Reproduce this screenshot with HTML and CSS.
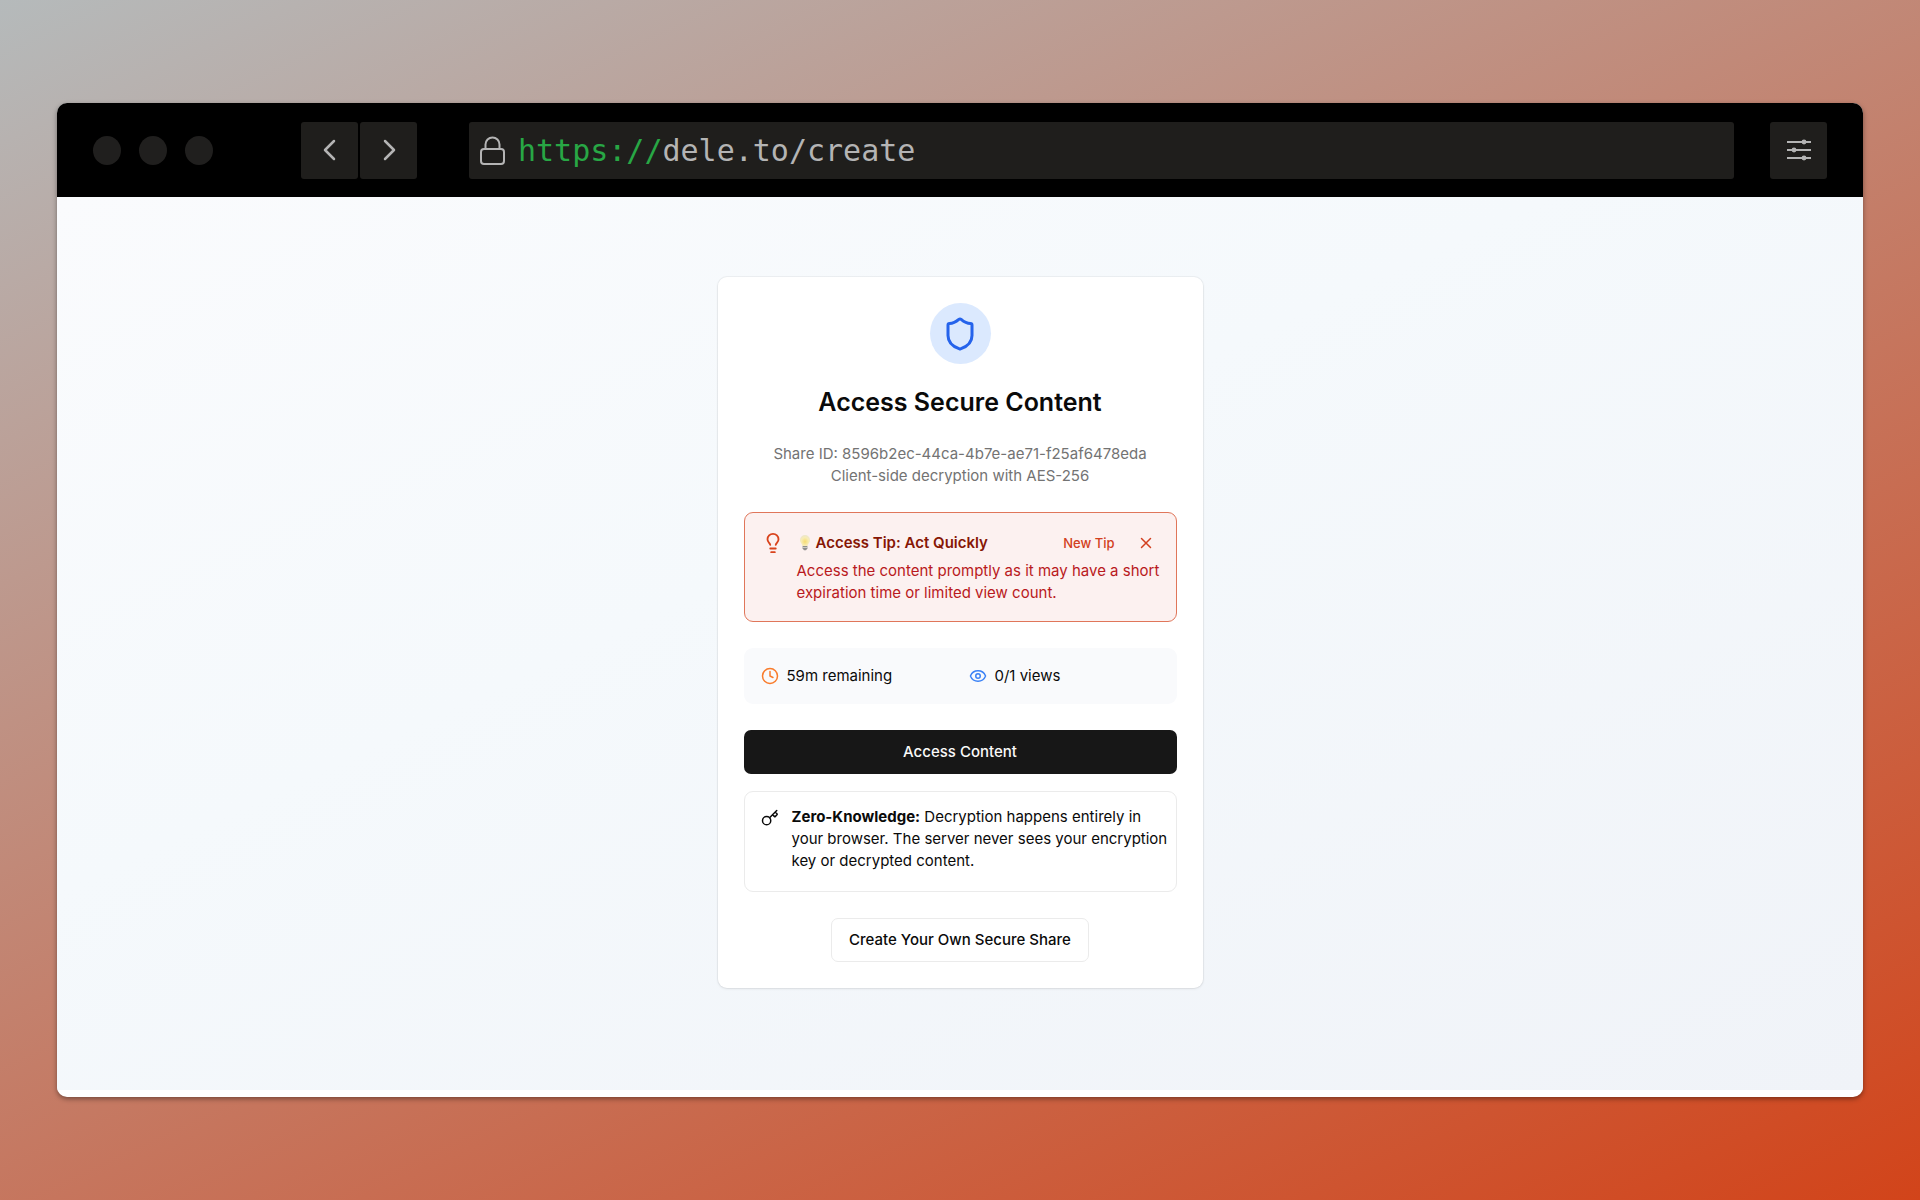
FILE: index.html
```html
<!DOCTYPE html>
<html lang="en">
<head>
<meta charset="utf-8">
<meta name="viewport" content="width=device-width, initial-scale=1">
<title>Access Secure Content</title>
<link rel="stylesheet" href="styles.css">
</head>
<body>
<div class="window">
  <header class="toolbar">
    <div class="lights"><span></span><span></span><span></span></div>
    <nav class="history" aria-label="History">
      <button type="button" class="tool" aria-label="Back"><svg width="32" height="32" viewBox="0 0 32 32"><path d="M20 7l-9 9 9 9"/></svg></button>
      <button type="button" class="tool" aria-label="Forward"><svg width="32" height="32" viewBox="0 0 32 32"><path d="M12 7l9 9-9 9"/></svg></button>
    </nav>
    <div class="address">
      <svg class="lock" width="26" height="30" viewBox="0 0 26 30"><rect x="1" y="13" width="23" height="15" rx="3"/><path d="M5.500 13V8.500a7 7 0 0 1 14 0V13"/></svg>
      <label class="scheme" for="url">https://</label>
      <input class="url" id="url" type="text" value="dele.to/create" spellcheck="false">
    </div>
    <button type="button" class="tool" aria-label="Settings"><svg class="sliders" width="24" height="24" viewBox="0 0 24 24"><path d="M0 4h24M0 12h24M0 20h24"/><circle cx="17" cy="4" r="2.4"/><circle cx="7" cy="12" r="2.4"/><circle cx="17" cy="20" r="2.4"/></svg></button>
  </header>
  <main class="page">
    <section class="card">
      <div class="badge"><svg class="icon" width="36" height="36" viewBox="0 0 24 24"><path d="M20 13c0 5-3.500 7.500-7.660 8.950a1 1 0 0 1-.67-.01C7.500 20.500 4 18 4 13V6a1 1 0 0 1 1-1c2 0 4.500-1.200 6.240-2.720a1.170 1.170 0 0 1 1.520 0C14.510 3.810 17 5 19 5a1 1 0 0 1 1 1z"/></svg></div>
      <h1 class="title">Access Secure Content</h1>
      <p class="description">Share ID: 8596b2ec-44ca-4b7e-ae71-f25af6478eda<br>Client-side decryption with AES-256</p>

      <div class="tip" role="alert">
        <svg class="icon tip-icon" width="22" height="22" viewBox="0 0 24 24"><path d="M15 14c.2-1 .7-1.700 1.500-2.500 1-.9 1.500-2.200 1.500-3.500A6 6 0 0 0 6 8c0 1 .2 2.200 1.500 3.500.7.7 1.300 1.500 1.500 2.500M9 18h6M10 22h4"/></svg>
        <div class="tip-body">
          <div class="tip-head">
            <svg class="bulb" width="16" height="18" viewBox="0 0 16 18">
              <defs><radialGradient id="glow" cx="50%" cy="60%" r="60%"><stop offset="0" stop-color="#f6dc70"/><stop offset=".6" stop-color="#f8ecb4"/><stop offset="1" stop-color="#ece6cc"/></radialGradient></defs>
              <path d="M8 1a5 5 0 0 0-5 5c0 2.500 2 3.500 2.400 6h5.200C11 9.500 13 8.500 13 6a5 5 0 0 0-5-5z" fill="url(#glow)"/>
              <path d="M5.600 12h4.800v2.500L9 16.300H7l-1.400-1.800z" fill="#8e8e8c"/><path d="M5.600 13.500h4.800" stroke="#d8d8d4" stroke-width=".8"/>
            </svg>
            <h2 class="tip-title">Access Tip: Act Quickly</h2>
            <button type="button" class="tip-new">New Tip</button>
            <button type="button" class="tip-close" aria-label="Dismiss"><svg class="icon" width="18" height="18" viewBox="0 0 24 24"><path d="M18 6 6 18M6 6l12 12"/></svg></button>
          </div>
          <p class="tip-text">Access the content promptly as it may have a short expiration time or limited view count.</p>
        </div>
      </div>

      <div class="stats">
        <div class="stat"><svg class="icon clock" width="18" height="18" viewBox="0 0 24 24"><circle cx="12" cy="12" r="10"/><path d="M12 6v6l4 2"/></svg><span>59m remaining</span></div>
        <div class="stat"><svg class="icon eye" width="18" height="18" viewBox="0 0 24 24"><path d="M2.060 12.350a1 1 0 0 1 0-.7 10.750 10.750 0 0 1 19.880 0 1 1 0 0 1 0 .7 10.750 10.750 0 0 1-19.880 0z"/><circle cx="12" cy="12" r="3"/></svg><span>0/1 views</span></div>
      </div>

      <button type="button" class="primary">Access Content</button>

      <div class="note">
        <svg class="icon" width="18" height="18" viewBox="0 0 24 24"><path d="m15.500 7.500 2.300 2.300a1 1 0 0 0 1.400 0l2.100-2.100a1 1 0 0 0 0-1.400L19 4M21 2l-9.600 9.600"/><circle cx="7.500" cy="15.500" r="5.500"/></svg>
        <p><strong>Zero-Knowledge:</strong> Decryption happens entirely in your browser. The server never sees your encryption key or decrypted content.</p>
      </div>

      <a class="secondary" href="#create">Create Your Own Secure Share</a>
    </section>
  </main>
</div>
</body>
</html>
```
FILE: styles.css
```css
*, *::before, *::after { box-sizing: border-box; }
h1, h2, p { margin: 0; }
button { border: 0; padding: 0; background: none; font: inherit; color: inherit; cursor: pointer; }

body {
  margin: 0;
  min-height: 100vh;
  padding: 103px 57px;
  display: flex;
  background: linear-gradient(155deg, #b5babb, #d2441a);
  font-family: Inter, "Liberation Sans", sans-serif;
  font-size: 15px;
  line-height: 22px;
  color: #0a0a0a;
}

.window {
  flex: 1;
  display: flex;
  flex-direction: column;
  border-radius: 10px;
  overflow: hidden;
  background: #fff;
  box-shadow: 0 2px 5px rgba(0, 0, 0, .4);
}

.toolbar {
  display: flex;
  align-items: center;
  height: 94px;
  padding: 0 36px;
  background: #000;
}
.lights { display: flex; gap: 18px; margin-right: 88px; }
.lights span { width: 28px; height: 29px; border-radius: 50%; background: #201f1e; }
.history { display: flex; gap: 2px; margin-right: 52px; }
.tool {
  display: flex;
  align-items: center;
  justify-content: center;
  width: 57px;
  height: 57px;
  border-radius: 3px;
  background: #1f1e1c;
}
.tool svg { fill: none; stroke: #b4b4b4; stroke-width: 2.5; stroke-linecap: round; stroke-linejoin: round; }
.tool .sliders { stroke-width: 2; stroke-linecap: butt; }
.sliders circle { fill: #b4b4b4; stroke: none; }
.address {
  flex: 1;
  display: flex;
  align-items: center;
  height: 57px;
  margin-right: 36px;
  padding: 2px 11px 0;
  border-radius: 3px;
  background: #1f1e1c;
  font-family: "DejaVu Sans Mono", monospace;
  font-size: 30px;
  line-height: 40px;
}
.lock { margin-right: 12px; fill: none; stroke: #b4b4b4; stroke-width: 2; }
.scheme { color: #28a745; }
.url { flex: 1; min-width: 0; padding: 0; border: 0; outline: 0; background: none; font: inherit; color: #b4b4b4; }

.page {
  flex: 1;
  margin-bottom: 7px;
  padding: 80px 16px;
  background: linear-gradient(155deg, #fafbfd, #f5f9fc 40%, #f0f3f8);
}
.card {
  display: flex;
  flex-direction: column;
  align-items: stretch;
  width: 100%;
  max-width: 485px;
  margin: 0 auto;
  padding: 26px;
  border-radius: 9px;
  background: #fff;
  box-shadow: 0 0 0 1px rgba(0, 0, 0, .04), 0 1px 3px rgba(0, 0, 0, .08);
}
.icon { flex: none; fill: none; stroke: currentColor; stroke-width: 2; stroke-linecap: round; stroke-linejoin: round; }

.badge {
  align-self: center;
  display: flex;
  align-items: center;
  justify-content: center;
  width: 61px;
  height: 61px;
  border-radius: 50%;
  background: #dbe9fe;
  color: #2563eb;
}
.title { margin-top: 20px; font-size: 25px; line-height: 36px; font-weight: 600; text-align: center; }
.description { margin: 23px 0 25px; color: #737373; text-align: center; }

.tip {
  display: flex;
  gap: 13px;
  padding: 17px 8px 17px 17px;
  border: 1px solid #e0765a;
  border-radius: 9px;
  background: #fcf1f0;
}
.tip-icon { margin-top: 2px; color: #d9431c; }
.tip-body { flex: 1; }
.tip-head { display: flex; align-items: center; height: 26px; }
.bulb { margin-right: 3px; }
.tip-title { flex: 1; font-size: 15px; font-weight: 600; color: #861605; }
.tip-new { margin-right: 22px; font-size: 13px; font-weight: 500; color: #d24020; }
.tip-close { display: flex; margin-right: 13px; color: #d24020; }
.tip-text { margin-top: 4px; color: #b91920; }

.stats {
  display: grid;
  grid-template-columns: 1fr 1fr;
  gap: 17px;
  margin: 26px 0;
  padding: 17px;
  border-radius: 9px;
  background: #f9fafc;
}
.stat { display: flex; align-items: center; gap: 8px; }
.clock { color: #f97c2c; }
.eye { color: #3b82f6; }

.primary { height: 44px; border-radius: 7px; background: #171717; color: #fafafa; font-weight: 500; }
.note {
  display: flex;
  gap: 13px;
  margin: 17px 0 26px;
  padding: 14px 8px 19px 16px;
  border: 1px solid #ebebeb;
  border-radius: 9px;
}
.note .icon { margin-top: 3px; }
.secondary {
  align-self: center;
  padding: 10px 17px;
  border: 1px solid #ebebeb;
  border-radius: 7px;
  color: inherit;
  font-weight: 500;
  text-decoration: none;
}
```
